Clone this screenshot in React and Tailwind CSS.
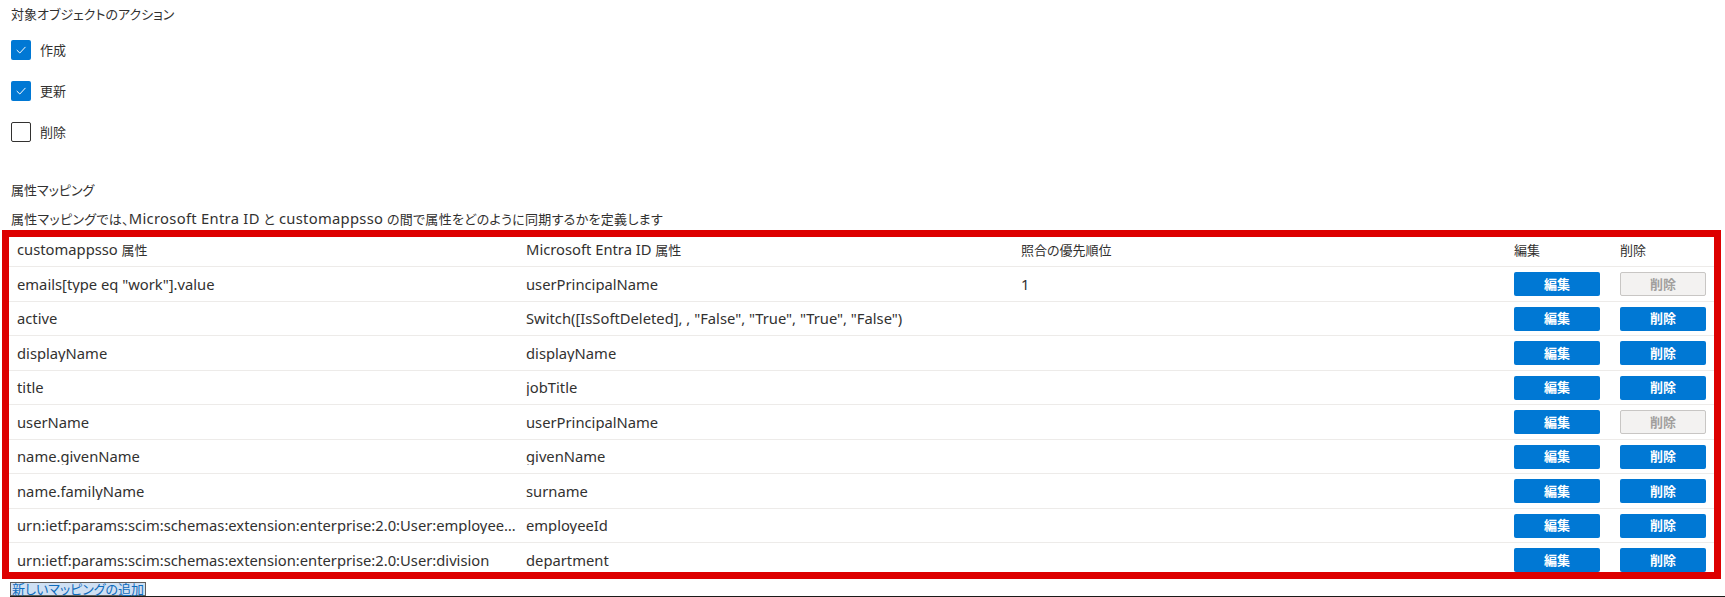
import React from "react";

// CJK runs stay at 13px; latin runs use a slightly larger size to match the reference widths
const J = ({ children }) => <span className="text-[13px]">{children}</span>;
const L = ({ children }) => <span className="text-[14.75px]">{children}</span>;

const rows = [
  { src: 'emails[type eq "work"].value', target: "userPrincipalName", priority: "1", canDelete: false },
  { src: "active", target: 'Switch([IsSoftDeleted], , "False", "True", "True", "False")', priority: "", canDelete: true },
  { src: "displayName", target: "displayName", priority: "", canDelete: true },
  { src: "title", target: "jobTitle", priority: "", canDelete: true },
  { src: "userName", target: "userPrincipalName", priority: "", canDelete: false },
  { src: "name.givenName", target: "givenName", priority: "", canDelete: true },
  { src: "name.familyName", target: "surname", priority: "", canDelete: true },
  { src: "urn:ietf:params:scim:schemas:extension:enterprise:2.0:User:employeeNumber", target: "employeeId", priority: "", canDelete: true },
  { src: "urn:ietf:params:scim:schemas:extension:enterprise:2.0:User:division", target: "department", priority: "", canDelete: true },
];

const Checkbox = ({ checked, label }) => (
  <div className="flex items-center h-[20px] gap-[9px]">
    {checked ? (
      <div className="w-[20px] h-[20px] rounded-[2px] bg-[#0078d4] flex items-center justify-center">
        <svg width="12" height="12" viewBox="0 0 12 12" fill="none">
          <path d="M2 6.3 L4.8 9 L10.2 3.2" stroke="white" strokeWidth="1" strokeLinecap="round" strokeLinejoin="round" />
        </svg>
      </div>
    ) : (
      <div className="w-[20px] h-[20px] rounded-[2px] border border-[#323130] bg-white"></div>
    )}
    <span className="text-[13px] leading-[18px]">{label}</span>
  </div>
);

const grid = "grid grid-cols-[509px_495px_493px_106px_102px]";
const btn = "w-[86px] h-[24px] rounded-[2px] text-[13px] font-bold leading-none";

const App = () => {
  return (
    <div className="w-[1725px] h-[597px] overflow-hidden bg-white text-[#323130] font-['Noto_Sans','Noto_Sans_CJK_JP',sans-serif] [font-feature-settings:'palt']">
      <div className="px-[11px]">
        <p className="pt-[5px] text-[13px] leading-[18px]">対象オブジェクトのアクション</p>
        <div className="mt-[17px] flex flex-col gap-[21px]">
          <Checkbox checked label="作成" />
          <Checkbox checked label="更新" />
          <Checkbox label="削除" />
        </div>
        <p className="mt-[39px] text-[13px] leading-[18px]">属性マッピング</p>
        <p className="mt-[10px] text-[13px] leading-[18px] tracking-[0.3px]">
          属性マッピングでは、<L>Microsoft Entra ID</L> と <L>customappsso</L> の間で属性をどのように同期するかを定義します
        </p>
      </div>

      <div className="ml-[2px] mt-[2px] w-[1719px] h-[349px] border-[7px] border-[#dd0000] overflow-hidden text-[14.75px]">
        <div className={`${grid} h-[30px] border-b border-[#edebe9] pt-[3px]`}>
          <div className="pl-2 leading-[18px]">customappsso <J>属性</J></div>
          <div className="pl-2 leading-[18px]">Microsoft Entra ID <J>属性</J></div>
          <div className="pl-2 leading-[18px]"><J>照合の優先順位</J></div>
          <div className="pl-2 leading-[18px]"><J>編集</J></div>
          <div className="pl-2 leading-[18px]"><J>削除</J></div>
        </div>
        {rows.map((row, i) => (
          <div key={i} className={`${grid} h-[34.5px] items-center border-b border-[#edebe9]`}>
            <div className="pl-2 pr-[2px] truncate leading-[18px]">{row.src}</div>
            <div className="pl-2 truncate leading-[18px]">{row.target}</div>
            <div className="pl-2 leading-[18px]">{row.priority}</div>
            <div className="pl-2">
              <button className={`${btn} bg-[#0078d4] text-white`}>編集</button>
            </div>
            <div className="pl-2">
              {row.canDelete ? (
                <button className={`${btn} bg-[#0078d4] text-white`}>削除</button>
              ) : (
                <button className={`${btn} bg-[#f3f2f1] border border-[#c8c6c4] text-[#a19f9d]`}>削除</button>
              )}
            </div>
          </div>
        ))}
      </div>

      <div className="mt-[3px] ml-[10px] w-fit h-[14px] border border-[#605e5c] bg-[#cfe0f3] text-[#0f6cbd] text-[13px] leading-[12px] px-px">
        新しいマッピングの追加
      </div>
      <div className="ml-[10px] h-[2px] bg-[#1b1a19]"></div>
    </div>
  );
};

export default App;
